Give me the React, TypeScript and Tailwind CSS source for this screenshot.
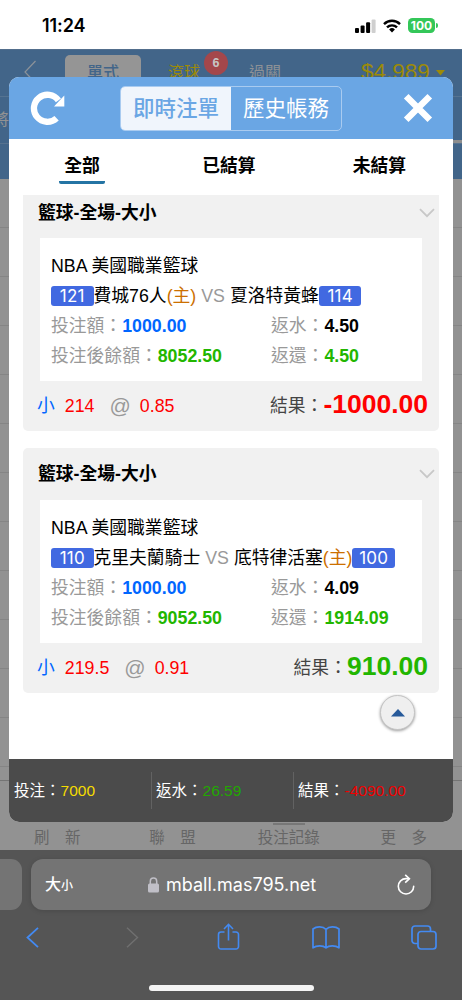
import type { ReactNode } from "react";

type Team = {
  name: string;
  score: string;
  home?: boolean;
};

type Bet = {
  id: string;
  stake: string;
  balance: string;
  rebate: string;
  returned: string;
  line: string;
  odds: string;
  result: string;
  left: Team;
  right: Team;
  first?: boolean;
};

const BETS: Bet[] = [
  {
    id: "a",
    stake: "1000.00",
    balance: "8052.50",
    rebate: "4.50",
    returned: "4.50",
    line: "214",
    odds: "0.85",
    result: "-1000.00",
    left: { name: "費城76人", score: "121", home: true },
    right: { name: "夏洛特黃蜂", score: "114" },
    first: true,
  },
  {
    id: "b",
    stake: "1000.00",
    balance: "9052.50",
    rebate: "4.09",
    returned: "1914.09",
    line: "219.5",
    odds: "0.91",
    result: "910.00",
    left: { name: "克里夫蘭騎士", score: "110" },
    right: { name: "底特律活塞", score: "100", home: true },
  },
];

const ROWS = Array.from({ length: 12 }, (_, i) => i);

function StatusBar() {
  return (
    <div className="flex h-[49px] shrink-0 items-center bg-white pl-[42px] pr-[24px] pt-[2px] text-black">
      <span className="font-['Inter',sans-serif] text-[18px] font-semibold leading-none tracking-[-0.1px]">
        11:24
      </span>
      <svg className="ml-auto" width="21" height="14" viewBox="0 0 21 14">
        <rect x="0" y="9" width="4" height="5" rx="1" />
        <rect x="5.6" y="6.5" width="4" height="7.5" rx="1" />
        <rect x="11.1" y="3.3" width="4" height="10.7" rx="1" />
        <rect x="16.6" y="0.5" width="4" height="13.5" rx="1" fill="#cfcfcf" />
      </svg>
      <svg className="ml-[7px]" width="18" height="14" viewBox="0 0 18 14">
        <g fill="none" stroke="#000" strokeWidth="2.4">
          <path d="M1 5.1a11.4 11.4 0 0 1 16 0" />
          <path d="M4 8.4a7.1 7.1 0 0 1 10 0" />
        </g>
        <path d="M9 13.4l-2.9-2.9a4.2 4.2 0 0 1 5.8 0z" />
      </svg>
      <div className="ml-[7px] flex h-[15px] w-[27px] items-center justify-center rounded-[4.5px] bg-[#34c759] pt-px font-['Inter',sans-serif] text-[12px] font-bold leading-none text-white">
        100
      </div>
      <div className="ml-px h-[5px] w-[2px] rounded-r-full bg-[#34c759]" />
    </div>
  );
}

function Backdrop() {
  return (
    <div className="flex h-[801px] w-full flex-col overflow-hidden bg-[#929292]">
      <div className="h-[130px] shrink-0 bg-[#426589]">
        <div className="relative flex h-[48px] items-start border-b border-[#557391] border-t border-t-[#526e8c]">
          <svg className="ml-[23px] mt-[10px]" width="14" height="24" viewBox="0 0 14 24" fill="none" stroke="#8c9299" strokeWidth="1.2">
            <path d="M12.5 1L2 12l10.500 11" />
          </svg>
          <div className="ml-[28px] mt-[5px] flex h-[40px] w-[76px] justify-center rounded-[5px] bg-[#959595] text-[16px] font-medium leading-[36px] text-[#426589]">
            單式
          </div>
          <span className="ml-[27px] mt-[5px] text-[16px] leading-[36px] text-[#9c8a08]">滾球</span>
          <span className="ml-[49px] mt-[5px] text-[16px] leading-[36px] text-[#8d9196]">過關</span>
          <span className="ml-[80px] mt-[4px] font-['Liberation_Sans',sans-serif] text-[22.500px] leading-[35px] text-[#9c8a08]">
            $4,989
          </span>
          <svg className="ml-[6px] mt-[20px]" width="9" height="7">
            <path d="M0 0h9L4.500 5.500z" fill="#9c8a08" />
          </svg>
          <span className="absolute left-[204px] top-px flex h-[24px] w-[24px] items-center justify-center rounded-full bg-[#a4474b] font-['Liberation_Sans',sans-serif] text-[12.500px] font-bold text-[#c6c6c6]">
            6
          </span>
        </div>
        <div className="flex h-[47px] items-center justify-between border-b border-[#56728f]">
          <span className="-ml-[7px] text-[16px] text-[#929292]">將</span>
          <div className="h-[3px] w-[10px] self-end bg-[#8e8e8e]" />
        </div>
      </div>
      {ROWS.map((i) => (
        <div key={i} className="h-[49px] shrink-0 border-b border-[#858585]" />
      ))}
      <div className="h-[14px] shrink-0 border-b border-[#747474]" />
      <div className="flex grow items-end justify-between pl-[34px] pr-[35px] text-[15.500px] leading-[25px] text-[#666]">
        <span>刷　新</span>
        <span className="ml-[22px]">聯　盟</span>
        <span className="relative ml-[15px]">
          投注記錄
          <span className="absolute -top-[2px] left-[15px] h-[2px] w-[32px] bg-[#777]" />
        </span>
        <span className="ml-[14px]">更　多</span>
      </div>
    </div>
  );
}

function ModalHeader() {
  return (
    <div className="flex h-[62px] shrink-0 items-center bg-[#6aa6e4] pl-[21px] pr-[20px]">
      <svg width="35" height="35" viewBox="0 0 35 35">
        <path d="M26.600 27.200A13.500 13.500 0 1 1 28.400 9.400" fill="none" stroke="#fff" strokeWidth="6.300" />
        <path d="M34.300 4.500v11H24z" fill="#fff" />
      </svg>
      <div className="ml-[55px] flex h-[45px] w-[222px] overflow-hidden rounded-[5px] border border-[#a9cbf0] text-[21.500px] leading-[44px]">
        <div className="w-[110px] bg-[#f0f5fc] text-center font-medium text-[#6aa6e4]">即時注單</div>
        <div className="grow text-center text-white">歷史帳務</div>
      </div>
      <svg className="ml-auto" width="30" height="30" viewBox="0 0 30 30" fill="none" stroke="#fff" strokeWidth="6.500">
        <path d="M3.200 3.200l23.600 23.600M26.800 3.200L3.200 26.800" />
      </svg>
    </div>
  );
}

function Score({ value }: { value: string }) {
  return (
    <span className="inline-flex h-[20px] w-[42.500px] items-center justify-center rounded-[3px] bg-[#4169e1] font-['Inter',sans-serif] text-[17px] leading-none tracking-[0.2px] text-white">
      {value}
    </span>
  );
}

function HomeMark() {
  return <span className="text-[#cc7000]">(主)</span>;
}

function Field({ label, value, tone }: { label: string; value: string; tone: string }) {
  return (
    <div className="whitespace-nowrap text-[#999]">
      {label}：<b className={tone}>{value}</b>
    </div>
  );
}

function BetCard({ bet }: { bet: Bet }) {
  const lost = bet.result.startsWith("-");
  return (
    <div className={bet.first ? "h-[236px] rounded-b-[5px] bg-[#f1f1f1]" : "mt-[17px] h-[245px] rounded-[5px] bg-[#f1f1f1]"}>
      <div className={bet.first ? "flex h-[43px] items-center pb-[8px] pl-[15px] pr-[4px]" : "flex h-[52px] items-center pb-px pl-[15px] pr-[4px]"}>
        <b>籃球-全場-大小</b>
        <svg className="ml-auto" width="16" height="10" viewBox="0 0 16 10" fill="none" stroke="#c8c8c8" strokeWidth="1.800">
          <path d="M1 1.200l7 7 7-7" />
        </svg>
      </div>
      <div className="mx-[17px] h-[143px] bg-white pl-[11px] pt-[13px]">
        <div>NBA 美國職業籃球</div>
        <div className="flex items-center whitespace-nowrap">
          <Score value={bet.left.score} />
          {bet.left.name}
          {bet.left.home && <HomeMark />}
          <span className="mx-[5px] text-[#999]">VS</span>
          {bet.right.name}
          {bet.right.home && <HomeMark />}
          <Score value={bet.right.score} />
        </div>
        <div className="grid grid-cols-[220px_1fr]">
          <Field label="投注額" value={bet.stake} tone="text-[#0066ff]" />
          <Field label="返水" value={bet.rebate} tone="text-black" />
          <Field label="投注後餘額" value={bet.balance} tone="text-[#22b600]" />
          <Field label="返還" value={bet.returned} tone="text-[#22b600]" />
        </div>
      </div>
      <div className="flex h-[50px] items-center pl-[14px] pr-[11px]">
        <span className="text-[#0066ff]">小</span>
        <span className="ml-[10px] text-[#f00]">{bet.line}</span>
        <span className="ml-[15px] text-[21px] text-[#999]">@</span>
        <span className="ml-[9px] text-[#f00]">{bet.odds}</span>
        <span className="ml-auto text-[#444]">結果：</span>
        <b className={lost ? "pb-[5px] text-[26.500px] text-[#f00]" : "pb-[5px] text-[26.500px] text-[#22b600]"}>{bet.result}</b>
      </div>
    </div>
  );
}

function Total({ label, children }: { label: string; children: ReactNode }) {
  return (
    <div className="flex h-[37px] w-[142px] items-center whitespace-nowrap border-r border-[#626262] pl-[4px] last:border-r-0">
      <span className="text-white">{label}：</span>
      {children}
    </div>
  );
}

function BetModal() {
  return (
    <div className="absolute left-[9px] top-[28px] flex h-[745px] w-[444px] flex-col overflow-hidden rounded-[10px] bg-white text-[17.800px] leading-[30px] text-black">
      <ModalHeader />
      <div className="flex h-[56px] shrink-0 justify-between pl-[50px] pr-[47px] font-bold">
        <div className="mt-[10px] flex h-[35px] w-[46px] items-end justify-center rounded-b-[2px] border-b-3 border-[#2474a4]">
          全部
        </div>
        <div className="mt-[12px]">已結算</div>
        <div className="mt-[12px]">未結算</div>
      </div>
      <div className="h-[564px] px-[14px]">
        {BETS.map((bet) => (
          <BetCard key={bet.id} bet={bet} />
        ))}
      </div>
      <div className="flex h-[63px] shrink-0 items-center bg-[#4b4b4b] pl-px text-[15.500px]">
        <Total label="投注">
          <span className="text-[#f5dc00]">7000</span>
        </Total>
        <Total label="返水">
          <span className="text-[#22a800]">26.59</span>
        </Total>
        <Total label="結果">
          <span className="text-[#f00000]">-4090.00</span>
        </Total>
      </div>
      {/* Back to top */}
      <button className="absolute left-[371px] top-[618px] flex h-[35px] w-[35px] items-center justify-center rounded-full border border-[#c4c4c4] bg-[#efefef] shadow-[0_1px_3px_rgba(0,0,0,0.4)]">
        <svg width="14" height="8">
          <path d="M0 7.500L7 0l7 7.500z" fill="#275a9a" />
        </svg>
      </button>
    </div>
  );
}

function BrowserBar() {
  return (
    <div className="flex h-[150px] shrink-0 flex-col bg-[#555]">
      <div className="mt-[9px] flex h-[51px] items-stretch gap-[9px]">
        <div className="w-[22px] rounded-r-[11px] bg-[#747474]" />
        <div className="flex w-[400px] items-center rounded-[12px] bg-[#747474] pl-[14px] pr-[16px] text-white shadow-[0_1px_5px_rgba(0,0,0,0.15)]">
          <span className="flex items-baseline font-medium leading-none">
            <span className="text-[16px]">大</span>
            <span className="text-[12px]">小</span>
          </span>
          <svg className="ml-[75px]" width="11" height="16" viewBox="0 0 11 16">
            <rect y="6.500" width="11" height="9" rx="1.500" fill="#c0bfc7" />
            <path d="M2.300 7V4.200a3.200 3.200 0 0 1 6.400 0V7" fill="none" stroke="#c0bfc7" strokeWidth="1.500" />
          </svg>
          <span className="ml-[7px] font-['Inter',sans-serif] text-[18px]">mball.mas795.net</span>
          <svg className="ml-auto" width="18" height="21" viewBox="0 0 18 21" fill="none" stroke="#fff" strokeWidth="1.600">
            <path d="M11.800 4.600H9a7.700 7.700 0 1 0 7.700 7.700" strokeLinecap="round" />
            <path d="M8.200 0.800l4.200 3.900-4.200 3.900" />
          </svg>
        </div>
      </div>
      <div className="mt-[9px] flex h-[36px] items-center pl-[26px] pr-[25px]">
        <svg width="13" height="21" viewBox="0 0 13 21" fill="none" stroke="#438af2" strokeWidth="1.800">
          <path d="M12 .8L1.500 10.500 12 20.200" />
        </svg>
        <svg className="ml-[87px]" width="13" height="21" viewBox="0 0 13 21" fill="none" stroke="#707070" strokeWidth="1.400">
          <path d="M1 .8l10.500 9.700L1 20.200" />
        </svg>
        <svg className="ml-[78px]" width="23" height="28" viewBox="0 0 22 28" fill="none" stroke="#438af2" strokeWidth="1.600">
          <path d="M7 9H3.500A2.500 2.500 0 0 0 1 11.500v12A2.500 2.500 0 0 0 3.500 26h15a2.500 2.500 0 0 0 2.500-2.500v-12A2.500 2.500 0 0 0 18.500 9H15" />
          <path d="M11 17.500V1.500M6.500 6L11 1.300 15.500 6" />
        </svg>
        <svg className="ml-[72px]" width="28" height="23" viewBox="0 0 28 23" fill="none" stroke="#438af2" strokeWidth="1.700" strokeLinejoin="round">
          <path d="M14 3.500C11 .2 4.500.2 1 3v18.800c3.500-2.500 10-2.600 13 0 3-2.600 9.500-2.500 13 0V3C23.500.2 17 .2 14 3.500zM14 3.500v18" />
        </svg>
        <svg className="ml-auto" width="26" height="25" viewBox="0 0 26 25" fill="none" stroke="#438af2" strokeWidth="1.700">
          <rect x="7" y="6.500" width="18" height="17.500" rx="3" />
          <path d="M7 18.500H4a3 3 0 0 1-3-3V4a3 3 0 0 1 3-3h12.500a3 3 0 0 1 3 3v2.500" />
        </svg>
      </div>
      <div className="mx-auto mt-[30px] h-[6px] w-[165px] rounded-full bg-[#f4f4f4]" />
    </div>
  );
}

export default function App() {
  return (
    <div className="flex h-[1000px] w-[462px] flex-col overflow-hidden bg-white font-['Liberation_Sans','Noto_Sans_CJK_TC',sans-serif]">
      <StatusBar />
      <div className="relative h-[801px] shrink-0">
        <Backdrop />
        <BetModal />
      </div>
      <BrowserBar />
    </div>
  );
}
